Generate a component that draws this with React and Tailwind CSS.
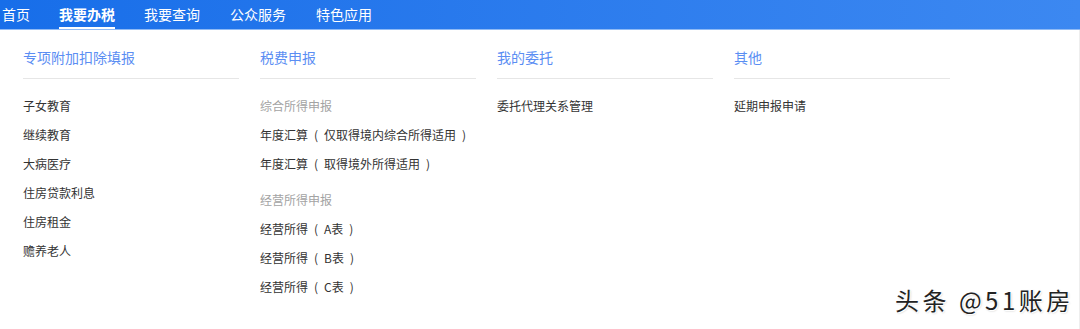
const navItems = ["首页", "我要办税", "我要查询", "公众服务", "特色应用"];

const columns = [
  {
    title: "专项附加扣除填报",
    groups: [
      { items: ["子女教育", "继续教育", "大病医疗", "住房贷款利息", "住房租金", "赡养老人"] },
    ],
  },
  {
    title: "税费申报",
    groups: [
      {
        label: "综合所得申报",
        items: ["年度汇算（仅取得境内综合所得适用）", "年度汇算（取得境外所得适用）"],
      },
      {
        label: "经营所得申报",
        items: ["经营所得（A表）", "经营所得（B表）", "经营所得（C表）"],
      },
    ],
  },
  { title: "我的委托", groups: [{ items: ["委托代理关系管理"] }] },
  { title: "其他", groups: [{ items: ["延期申报申请"] }] },
];

// full-width parens centred in their em box, as the reference font draws them
function Label({ text }) {
  return text.split(/([（）])/).map((part, i) =>
    part === "（" || part === "）" ? (
      <span key={i} className="inline-block w-[16px] text-center">
        {part === "（" ? "(" : ")"}
      </span>
    ) : (
      part
    )
  );
}

export default function App() {
  return (
    <div
      className="relative h-[329px] w-[1080px] overflow-hidden bg-white"
      style={{ fontFamily: '"Noto Sans CJK SC", "Noto Sans", sans-serif' }}
    >
      <nav className="flex h-[30px] items-stretch border-b border-[#8fbaf5] bg-gradient-to-r from-[#176ee9] to-[#3c88f1] text-[14px] text-white">
        {navItems.map((item, i) => (
          <a
            key={item}
            className={
              i === 0
                ? "flex items-center pl-[2px] pr-[29px]"
                : i === 1
                ? "mr-[29px] flex items-center border-b-2 border-white pt-[2px] font-bold"
                : "mr-[30px] flex items-center"
            }
          >
            {item}
          </a>
        ))}
      </nav>

      <div className="flex h-[299px] border-r border-[#eeeeee] pl-[23px]">
        {columns.map((col) => (
          <div key={col.title} className="mr-[21px] w-[216px]">
            <div className="flex h-[49px] items-end border-b border-[#e6e6e6] pb-[10px] text-[14px] text-[#5b8ef3]">
              {col.title}
            </div>
            <div className="pt-[12px]">
              {col.groups.map((g, gi) => (
                <div key={gi} className={gi > 0 ? "mt-[7px]" : ""}>
                  {g.label && (
                    <div className="flex h-[29px] items-center text-[12px] text-[#a3a3a3]">
                      {g.label}
                    </div>
                  )}
                  {g.items.map((it) => (
                    <div
                      key={it}
                      className="flex h-[29px] items-center whitespace-nowrap text-[12px] text-[#333333]"
                    >
                      <span>
                        <Label text={it} />
                      </span>
                    </div>
                  ))}
                </div>
              ))}
            </div>
          </div>
        ))}
      </div>

      <div
        className="absolute left-[895px] top-[285px] text-[24px] leading-[30px] tracking-[3.5px] text-[#222222]"
        style={{ textShadow: "1px 1px 0 #ffffff, -1px -1px 0 #ffffff, 1px 1px 2px rgba(0,0,0,0.25)" }}
      >
        头条 @51账房
      </div>
    </div>
  );
}
